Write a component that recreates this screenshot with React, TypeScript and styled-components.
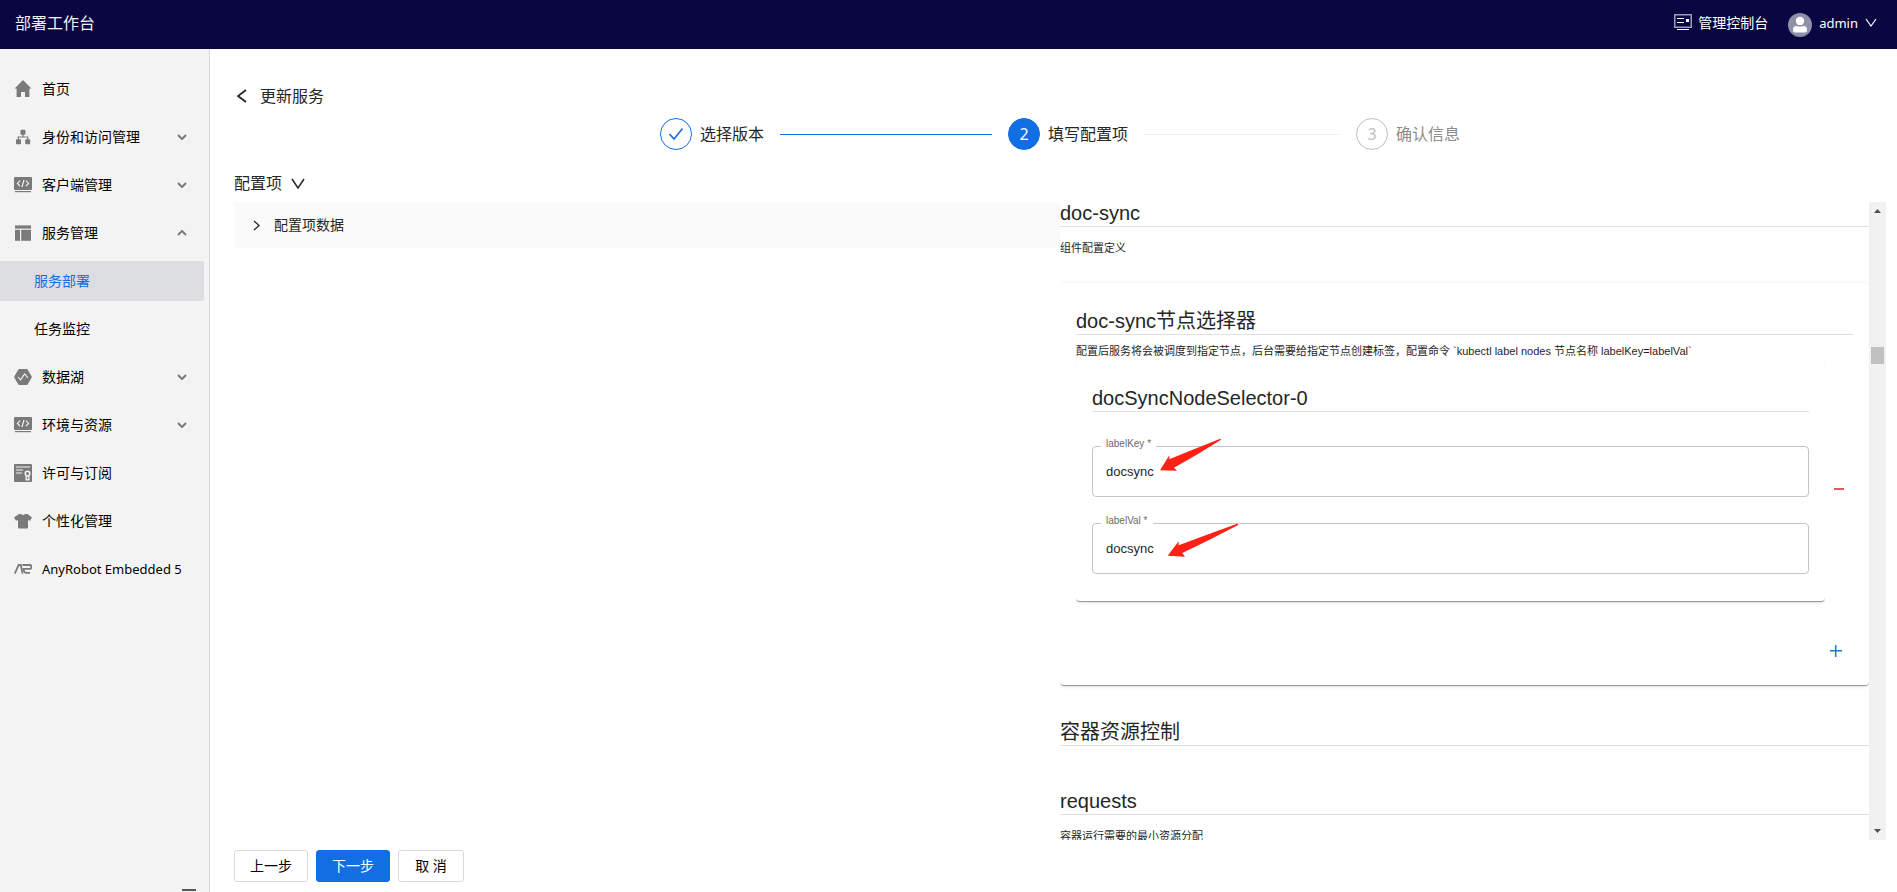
import React from "react";
import styled, { createGlobalStyle, css } from "styled-components";

const BLUE = "#126ee3";
const UI_FONT = `"Noto Sans", "Noto Sans CJK SC", sans-serif`;
const FORM_FONT = `"Liberation Sans", "Noto Sans CJK SC", sans-serif`;

const GlobalStyle = createGlobalStyle`
  *, *::before, *::after { box-sizing: border-box; }
  body {
    margin: 0;
    background: #fff;
    color: #000;
    font-family: ${UI_FONT};
    font-size: 14px;
    line-height: 22px;
  }
  button, input { font: inherit; color: inherit; }
  h1, h2, h3, p, ul { margin: 0; padding: 0; font-weight: 400; }
  ul { list-style: none; }
  a { color: inherit; text-decoration: none; }
  svg { display: block; flex: none; }
`;

/* ---------- shell ---------- */

const Page = styled.div`
  display: flex;
  flex-direction: column;
  height: 100vh;
  overflow: hidden;
`;

const TopBar = styled.header`
  flex: none;
  display: flex;
  align-items: center;
  justify-content: space-between;
  height: 49px;
  padding: 0 20px 4px 15px;
  background: #0a0642;
  color: #fff;
`;

const Brand = styled.h1`
  font-size: 16px;
  line-height: 24px;
  font-weight: 400;
  color: #f0f0f4;
`;

const TopActions = styled.div`
  display: flex;
  align-items: center;
  gap: 20px;
`;

const ConsoleLink = styled.a`
  display: flex;
  align-items: center;
  gap: 6px;
`;

const UserButton = styled.button`
  display: flex;
  align-items: center;
  gap: 7px;
  padding: 0;
  border: 0;
  background: none;
  font-size: 13px;
  cursor: pointer;
`;

const Avatar = styled.span`
  padding-top: 4px;
`;

const Body = styled.div`
  flex: 1;
  min-height: 0;
  display: flex;
`;

/* ---------- side navigation ---------- */

const Sidebar = styled.aside`
  flex: none;
  width: 210px;
  display: flex;
  flex-direction: column;
  justify-content: space-between;
  padding-top: 20px;
  background: #f3f3f3;
  border-right: 1px solid #d9d9db;
`;

const NavList = styled.ul`
  display: flex;
  flex-direction: column;
  gap: 8px;
`;

const NavLink = styled.a<{ $sub?: boolean; $active?: boolean }>`
  display: flex;
  align-items: center;
  gap: 10px;
  height: 40px;
  margin-right: 5px;
  padding: 0 17px 0 ${(p) => (p.$sub ? "34px" : "14px")};
  border-radius: 0 2px 2px 0;
  white-space: nowrap;
  ${(p) =>
    p.$active &&
    css`
      background: #dcdde1;
      color: ${BLUE};
    `}
`;

const NavText = styled.span<{ $latin?: boolean }>`
  flex: 1;
  font-size: ${(p) => (p.$latin ? "13px" : "14px")};
`;

const CollapseButton = styled.button`
  align-self: flex-end;
  margin: 0 13px -10px 0;
  padding: 0;
  border: 0;
  background: none;
`;

/* ---------- main column ---------- */

const Main = styled.main`
  flex: 1;
  min-width: 0;
  display: flex;
  flex-direction: column;
  padding: 35px 11px 10px 24px;
  color: #262626;
`;

const BackRow = styled.div`
  display: flex;
  align-items: center;
  gap: 13px;
  padding-left: 3px;
  font-size: 16px;
  line-height: 24px;
`;

const PlainButton = styled.button`
  padding: 0;
  border: 0;
  background: none;
  cursor: pointer;
`;

const PageTitle = styled.h2`
  font-size: 16px;
  line-height: 24px;
`;

const Steps = styled.ol`
  align-self: center;
  display: flex;
  gap: 16px;
  width: 100%;
  max-width: 800px;
  margin: 10px 0 21px;
  padding: 0;
  list-style: none;
  font-size: 16px;
  line-height: 32px;
`;

type StepState = "done" | "current" | "waiting";

const StepItem = styled.li<{ $state: StepState; $last?: boolean }>`
  flex: ${(p) => (p.$last ? "none" : "1")};
  display: flex;
  align-items: center;
  gap: 8px;
  white-space: nowrap;
  color: ${(p) => (p.$state === "waiting" ? "#8c8c8c" : "#262626")};
  ${(p) =>
    !p.$last &&
    css`
      &::after {
        content: "";
        flex: 1;
        height: 1px;
        margin-left: 8px;
        background: ${p.$state === "done" ? BLUE : "#f0f0f0"};
      }
    `}
`;

const StepMark = styled.span<{ $state: StepState }>`
  display: flex;
  align-items: center;
  justify-content: center;
  width: 32px;
  height: 32px;
  border: 1px solid ${(p) => (p.$state === "waiting" ? "#bfbfbf" : BLUE)};
  border-radius: 50%;
  background: ${(p) => (p.$state === "current" ? BLUE : "#fff")};
  color: ${(p) => (p.$state === "current" ? "#fff" : "#bfbfbf")};
`;

const SectionToggle = styled.button`
  align-self: flex-start;
  display: flex;
  align-items: center;
  gap: 9px;
  margin-bottom: 7px;
  padding: 0;
  border: 0;
  background: none;
  font-size: 16px;
  line-height: 24px;
`;

const Columns = styled.div`
  flex: 1;
  min-height: 0;
  display: grid;
  grid-template-columns: 1fr 1fr;
`;

const TreePanel = styled.section`
  min-width: 0;
`;

const TreeHeader = styled.button`
  display: flex;
  align-items: center;
  gap: 14px;
  width: 100%;
  height: 46px;
  padding: 0 19px;
  border: 0;
  background: #fafafa;
  text-align: left;
`;

const Footer = styled.footer`
  display: flex;
  gap: 8px;
  padding-top: 10px;
`;

const ActionButton = styled.button<{ $primary?: boolean }>`
  min-width: 66px;
  height: 32px;
  padding: 0 15px;
  border: 1px solid ${(p) => (p.$primary ? BLUE : "#d9d9d9")};
  border-radius: 3px;
  background: ${(p) => (p.$primary ? BLUE : "#fff")};
  color: ${(p) => (p.$primary ? "#fff" : "#000")};
  line-height: 22px;
`;

/* ---------- generated form ---------- */

const FormPanel = styled.section`
  min-width: 0;
  min-height: 0;
  display: flex;
  overflow: hidden;
  font-family: ${FORM_FONT};
`;

const FormContent = styled.form`
  flex: 1;
  min-width: 0;
  overflow: hidden;
`;

const Section = styled.div`
  margin-bottom: 44px;
`;

const Heading = styled.h3`
  padding-bottom: 2px;
  border-bottom: 1px solid #e0e0e0;
  font-size: 20px;
  line-height: 22px;
`;

const Hint = styled.p<{ $tight?: boolean }>`
  margin-top: ${(p) => (p.$tight ? "8px" : "13px")};
  font-size: 11px;
  line-height: 16px;
  color: #1f1f1f;
`;

const Card = styled.div<{ $inner?: boolean }>`
  padding: 26px 16px 27px;
  border-radius: 4px;
  background: #fff;
  box-shadow: 0 2px 1px -1px rgba(0, 0, 0, 0.24), 0 1px 1px 0 rgba(0, 0, 0, 0.18),
    0 1px 4px 0 rgba(0, 0, 0, 0.14);
  clip-path: inset(${(p) => (p.$inner ? "0" : "-6px")} 0 -6px 0);
  ${(p) =>
    p.$inner
      ? css`
          flex: 1;
          min-width: 0;
        `
      : css`
          margin: 27px 0 36px;
          padding: 27px 16px 17px;
        `}
`;

const CardRow = styled.div`
  display: flex;
  margin-top: 2px;
`;

const RemoveCell = styled.div`
  flex: none;
  display: flex;
  align-items: center;
  justify-content: center;
  width: 28px;
  padding-top: 16px;
`;

const AddRow = styled.div`
  display: flex;
  justify-content: flex-end;
  margin-top: 33px;
`;

const AddButton = styled(PlainButton)`
  display: flex;
  align-items: center;
  justify-content: center;
  width: 34px;
  height: 34px;
`;

const Fields = styled.div`
  display: flex;
  flex-direction: column;
  gap: 26px;
  margin-top: 34px;
`;

const Field = styled.div`
  position: relative;
`;

const FieldLabel = styled.label`
  position: absolute;
  left: 9px;
  top: -8px;
  padding: 0 5px;
  background: #fff;
  color: #6b6b6b;
  font-size: 10px;
  line-height: 12px;
`;

const FieldInput = styled.input`
  display: block;
  width: 100%;
  height: 51px;
  padding: 0 13px;
  border: 1px solid #c4c4c4;
  border-radius: 4px;
  background: #fff;
  font-size: 13px;
  outline: none;
`;

const PointerArrow = styled.svg<{ $left: number; $top: number }>`
  position: absolute;
  left: ${(p) => p.$left}px;
  top: ${(p) => p.$top}px;
  pointer-events: none;
`;

const ScrollTrack = styled.div`
  flex: none;
  display: flex;
  flex-direction: column;
  align-items: center;
  width: 17px;
  padding: 7px 0;
  background: #f1f1f1;
`;

const ScrollThumb = styled.div`
  width: 13px;
  height: 17px;
  margin: 134px 0 auto;
  background: #c1c1c1;
`;

/* ---------- icons ---------- */

const G = "#7a7a7a";

const Chevron = ({
  dir,
  w,
  h,
  color = "#262626",
  stroke = 1.4,
}: {
  dir: "up" | "down" | "left" | "right";
  w: number;
  h: number;
  color?: string;
  stroke?: number;
}) => {
  const pts = {
    down: `1,1 ${w / 2},${h - 1} ${w - 1},1`,
    up: `1,${h - 1} ${w / 2},1 ${w - 1},${h - 1}`,
    left: `${w - 1},1 1,${h / 2} ${w - 1},${h - 1}`,
    right: `1,1 ${w - 1},${h / 2} 1,${h - 1}`,
  }[dir];
  return (
    <svg width={w} height={h} viewBox={`0 0 ${w} ${h}`} aria-hidden="true">
      <polyline points={pts} fill="none" stroke={color} strokeWidth={stroke} />
    </svg>
  );
};

const Icon18 = ({ children }: { children: React.ReactNode }) => (
  <svg width="18" height="18" viewBox="0 0 18 18" fill={G} aria-hidden="true">
    {children}
  </svg>
);

const HomeIcon = () => (
  <Icon18>
    <path d="M9 0 L17.4 8.4 H15.4 V17 H11 V12 H7 V17 H2.6 V8.4 H0.6 Z" />
  </Icon18>
);

const OrgIcon = () => (
  <Icon18>
    <rect x="6.5" y="1.8" width="5" height="5" rx="1" />
    <rect x="2" y="11.2" width="5" height="5" rx="1" />
    <rect x="11.2" y="11.2" width="5" height="5" rx="1" />
    <path d="M8.4 6 H9.6 V8.4 H14.4 V12 H13.2 V9.6 H4.9 V12 H3.7 V8.4 H8.4 Z" />
  </Icon18>
);

const CodeIcon = () => (
  <Icon18>
    <rect x="0" y="1" width="18" height="13" rx="1" />
    <rect x="1" y="15" width="16" height="1.2" />
    <path
      d="M6 4.6 L3.4 7.4 L6 10.2 M12 4.6 L14.6 7.4 L12 10.2 M10 4 L8 10.8"
      fill="none"
      stroke="#f3f3f3"
      strokeWidth="1.2"
    />
  </Icon18>
);

const LayoutIcon = () => (
  <Icon18>
    <rect x="1" y="1.4" width="16" height="3.2" />
    <rect x="1" y="5.8" width="5" height="11" />
    <rect x="7.2" y="5.8" width="9.8" height="11" />
  </Icon18>
);

const LakeIcon = () => (
  <Icon18>
    <path d="M5.4 1 H12.6 Q13.4 1 13.8 1.7 L17.6 8.2 Q18 9 17.6 9.8 L13.8 16.3 Q13.4 17 12.6 17 H5.4 Q4.6 17 4.2 16.3 L0.4 9.8 Q0 9 0.4 8.2 L4.2 1.7 Q4.6 1 5.4 1 Z" />
    <path
      d="M4 9 L6.6 11.8 L10.6 6 L14 9.8"
      fill="none"
      stroke="#f3f3f3"
      strokeWidth="1.1"
    />
  </Icon18>
);

const LicenseIcon = () => (
  <Icon18>
    <rect x="0" y="0" width="18" height="18" rx="1" />
    <g fill="none" stroke="#f3f3f3" strokeWidth="1.2">
      <path d="M2 3 H16 M2 6 H9 M2 9 H8" />
      <circle cx="13.5" cy="9.6" r="2.3" strokeWidth="1.5" />
      <path d="M12.2 12 V15.8 H14.8 V12" strokeWidth="1.4" />
    </g>
  </Icon18>
);

const ShirtIcon = () => (
  <Icon18>
    <path d="M5 2 H7 Q9 3.8 11 2 H13.4 L18 5.4 L16 8.8 L14 8 V15.4 Q14 16.4 13 16.4 H5 Q4 16.4 4 15.4 V8 L2 8.8 L0 5.4 Z" />
  </Icon18>
);

const RobotMark = () => (
  <Icon18>
    <g fill="none" stroke={G} strokeWidth="1.8">
      <path d="M0.8 13.6 L4.6 5 H6.8 L8.6 13.6" />
      <path d="M8.4 5 H16 Q17.2 5 17.2 6.2 V7.6 Q17.2 8.8 16 8.8 H9.4 Q10 12.8 12.4 12.8 H16" />
    </g>
  </Icon18>
);

const ConsoleIcon = () => (
  <svg width="18" height="18" viewBox="0 0 18 18" fill="none" aria-hidden="true">
    <rect x="0.75" y="0.75" width="16.5" height="12.5" stroke="#9d9bb3" strokeWidth="1.5" />
    <path d="M3 4.5 H10 M3 8.5 H10 M3 15.5 H15" stroke="#fff" />
    <rect x="12" y="5" width="3" height="3" fill="#fff" />
  </svg>
);

const AvatarIcon = () => (
  <svg width="24" height="24" viewBox="0 0 24 24" aria-hidden="true">
    <circle cx="12" cy="12" r="12" fill="#8f90a8" />
    <circle cx="12" cy="8" r="4.2" fill="#fff" />
    <path
      d="M5 16.5 Q5 13 8.5 13 Q12 14.4 15.5 13 Q19 13 19 16.5 V17.5 Q19 19.5 17 19.5 H7 Q5 19.5 5 17.5 Z"
      fill="#fff"
    />
  </svg>
);

/* ---------- data ---------- */

interface NavEntry {
  text: string;
  icon?: React.ReactNode;
  chevron?: "up" | "down";
  active?: boolean;
  latin?: boolean;
}

const navEntries: NavEntry[] = [
  { text: "首页", icon: <HomeIcon /> },
  { text: "身份和访问管理", icon: <OrgIcon />, chevron: "down" },
  { text: "客户端管理", icon: <CodeIcon />, chevron: "down" },
  { text: "服务管理", icon: <LayoutIcon />, chevron: "up" },
  { text: "服务部署", active: true },
  { text: "任务监控" },
  { text: "数据湖", icon: <LakeIcon />, chevron: "down" },
  { text: "环境与资源", icon: <CodeIcon />, chevron: "down" },
  { text: "许可与订阅", icon: <LicenseIcon /> },
  { text: "个性化管理", icon: <ShirtIcon /> },
  { text: "AnyRobot Embedded 5", icon: <RobotMark />, latin: true },
];

const steps: { title: string; state: StepState }[] = [
  { title: "选择版本", state: "done" },
  { title: "填写配置项", state: "current" },
  { title: "确认信息", state: "waiting" },
];

export default function App() {
  return (
    <Page>
      <GlobalStyle />
      <TopBar>
        <Brand>部署工作台</Brand>
        <TopActions>
          <ConsoleLink href="#console">
            <ConsoleIcon />
            管理控制台
          </ConsoleLink>
          <UserButton type="button">
            <Avatar>
              <AvatarIcon />
            </Avatar>
            admin
            <Chevron dir="down" w={12} h={9} color="#fff" stroke={1.2} />
          </UserButton>
        </TopActions>
      </TopBar>

      <Body>
        <Sidebar>
          <nav>
            <NavList>
              {navEntries.map((entry) => (
                <li key={entry.text}>
                  <NavLink href="#nav" $sub={!entry.icon} $active={entry.active}>
                    {entry.icon}
                    <NavText $latin={entry.latin}>{entry.text}</NavText>
                    {entry.chevron && (
                      <Chevron dir={entry.chevron} w={10} h={6} color={G} stroke={2} />
                    )}
                  </NavLink>
                </li>
              ))}
            </NavList>
          </nav>
          <CollapseButton type="button" aria-label="收起">
            <svg width="14" height="14" viewBox="0 0 14 14" aria-hidden="true">
              <path d="M0 2 H14 M0 7 H14 M0 12 H14" stroke="#262626" strokeWidth="1.5" />
            </svg>
          </CollapseButton>
        </Sidebar>

        <Main>
          <BackRow>
            <PlainButton type="button" aria-label="返回">
              <Chevron dir="left" w={10} h={14} stroke={1.8} />
            </PlainButton>
            <PageTitle>更新服务</PageTitle>
          </BackRow>

          <Steps>
            {steps.map((step, i) => (
              <StepItem key={step.title} $state={step.state} $last={i === steps.length - 1}>
                <StepMark $state={step.state}>
                  {step.state === "done" ? (
                    <svg width="16" height="14" viewBox="0 0 16 14" aria-hidden="true">
                      <polyline
                        points="1.5,7 6,12 14.5,1.5"
                        fill="none"
                        stroke={BLUE}
                        strokeWidth="1.6"
                      />
                    </svg>
                  ) : (
                    i + 1
                  )}
                </StepMark>
                {step.title}
              </StepItem>
            ))}
          </Steps>

          <SectionToggle type="button">
            配置项
            <Chevron dir="down" w={14} h={11} stroke={1.5} />
          </SectionToggle>

          <Columns>
            <TreePanel>
              <TreeHeader type="button">
                <Chevron dir="right" w={7} h={11} stroke={1.3} />
                配置项数据
              </TreeHeader>
            </TreePanel>

            <FormPanel>
              <FormContent>
                <Heading>doc-sync</Heading>
                <Hint>组件配置定义</Hint>

                <Card>
                  <Heading>doc-sync节点选择器</Heading>
                  <Hint $tight>
                    配置后服务将会被调度到指定节点，后台需要给指定节点创建标签，配置命令 `kubectl label
                    nodes 节点名称 labelKey=labelVal`
                  </Hint>
                  <CardRow>
                    <Card $inner>
                      <Heading>docSyncNodeSelector-0</Heading>
                      <Fields>
                        <Field>
                          <FieldInput id="labelKey" defaultValue="docsync" />
                          <FieldLabel htmlFor="labelKey">labelKey *</FieldLabel>
                          <PointerArrow
                            $left={67}
                            $top={-8}
                            width="63"
                            height="34"
                            viewBox="327 24 189 102"
                            aria-hidden="true"
                          >
                            <path
                              d="M330 121 L358 76 V88 Q430 58 509 27 Q516 26 511 31 Q440 76 372 113 L381 122 Z"
                              fill="#ff2116"
                            />
                          </PointerArrow>
                        </Field>
                        <Field>
                          <FieldInput id="labelVal" defaultValue="docsync" />
                          <FieldLabel htmlFor="labelVal">labelVal *</FieldLabel>
                          <PointerArrow
                            $left={75}
                            $top={0}
                            width="72"
                            height="35"
                            viewBox="351 279 216 105"
                            aria-hidden="true"
                          >
                            <path
                              d="M353 377 L386 334 V346 Q470 314 561 281 Q567 281 563 286 Q480 330 397 369 L405 380 Z"
                              fill="#ff2116"
                            />
                          </PointerArrow>
                        </Field>
                      </Fields>
                    </Card>
                    <RemoveCell>
                      <PlainButton type="button" aria-label="删除">
                        <svg width="10" height="2" viewBox="0 0 10 2" aria-hidden="true">
                          <rect width="10" height="2" fill="#dc5c5c" />
                        </svg>
                      </PlainButton>
                    </RemoveCell>
                  </CardRow>
                  <AddRow>
                    <AddButton type="button" aria-label="添加">
                      <svg width="12" height="12" viewBox="0 0 12 12" aria-hidden="true">
                        <path d="M0 5.7 H12 M5.7 0 V12" stroke="#1976d2" strokeWidth="1.5" />
                      </svg>
                    </AddButton>
                  </AddRow>
                </Card>

                <Section>
                  <Heading>容器资源控制</Heading>
                </Section>
                <Heading>requests</Heading>
                <Hint>容器运行需要的最小资源分配</Hint>
              </FormContent>
              <ScrollTrack aria-hidden="true">
                <svg width="7" height="4" viewBox="0 0 7 4">
                  <path d="M0 4 L3.5 0 L7 4 Z" fill="#505050" />
                </svg>
                <ScrollThumb />
                <svg width="7" height="4" viewBox="0 0 7 4">
                  <path d="M0 0 L3.5 4 L7 0 Z" fill="#505050" />
                </svg>
              </ScrollTrack>
            </FormPanel>
          </Columns>

          <Footer>
            <ActionButton type="button">上一步</ActionButton>
            <ActionButton type="button" $primary>
              下一步
            </ActionButton>
            <ActionButton type="button">取 消</ActionButton>
          </Footer>
        </Main>
      </Body>
    </Page>
  );
}
